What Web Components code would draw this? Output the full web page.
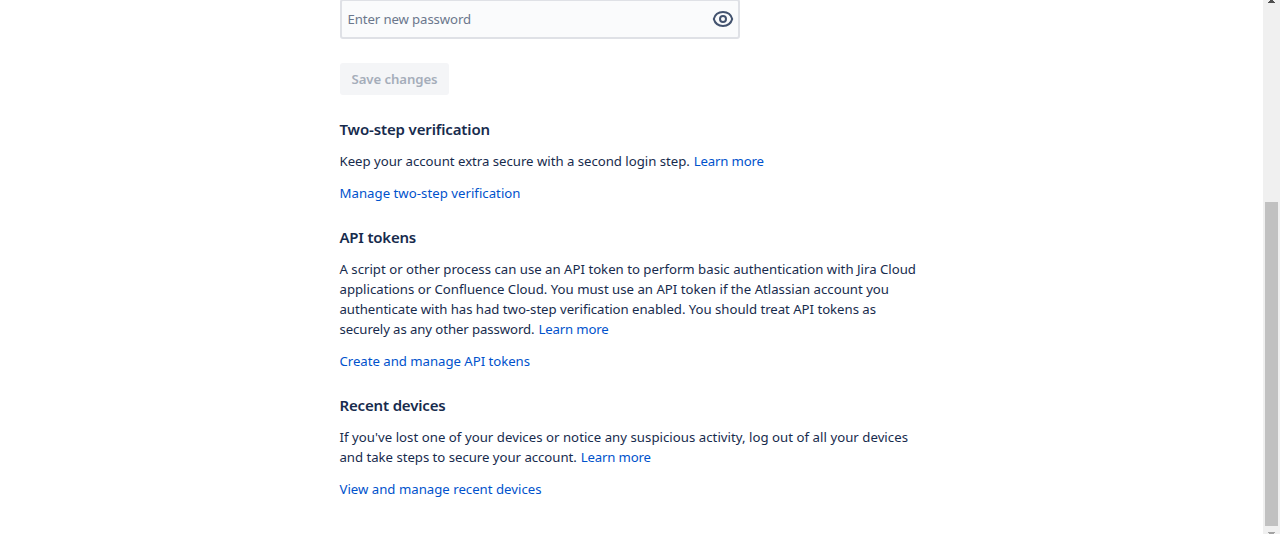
<!DOCTYPE html>
<html lang="en">
<head>
<meta charset="utf-8">
<title>Security</title>
<style>
html,body{margin:0;height:534px;overflow:hidden;background:#fff}
body{font:13.2px/20px "Noto Sans","Open Sans",sans-serif;color:#172b4d}
</style>
</head>
<body>
<security-page>
  <password-field><text-run w="123.5">Enter new password</text-run></password-field>
  <save-button><text-run w="86">Save changes</text-run></save-button>
  <info-section>
    <text-run slot="title" w="150.5">Two-step verification</text-run>
    <text-line><text-run w="350.3">Keep your account extra secure with a second login step.</text-run><text-run link w="70">Learn more</text-run></text-line>
    <text-run slot="action" link w="181">Manage two-step verification</text-run>
  </info-section>
  <info-section>
    <text-run slot="title" w="76.5">API tokens</text-run>
    <text-line><text-run w="576.5">A script or other process can use an API token to perform basic authentication with Jira Cloud</text-run></text-line>
    <text-line><text-run w="549.5">applications or Confluence Cloud. You must use an API token if the Atlassian account you</text-run></text-line>
    <text-line><text-run w="536.5">authenticate with has had two-step verification enabled. You should treat API tokens as</text-run></text-line>
    <text-line><text-run w="195">securely as any other password.</text-run><text-run link w="70">Learn more</text-run></text-line>
    <text-run slot="action" link w="190.5">Create and manage API tokens</text-run>
  </info-section>
  <info-section>
    <text-run slot="title" w="106">Recent devices</text-run>
    <text-line><text-run w="568.5">If you've lost one of your devices or notice any suspicious activity, log out of all your devices</text-run></text-line>
    <text-line><text-run w="237.3">and take steps to secure your account.</text-run><text-run link w="70">Learn more</text-run></text-line>
    <text-run slot="action" link w="202">View and manage recent devices</text-run>
  </info-section>
</security-page>
<script>
function define(name, html, connected) {
  customElements.define(name, class extends HTMLElement {
    constructor() {
      super();
      this.attachShadow({mode: 'open'}).innerHTML = html;
    }
    connectedCallback() { if (connected) connected(this); }
  });
}
define('scroll-bar', `<style>
:host{display:flex;flex-direction:column;justify-content:space-between;width:17px;height:534px;background:#f0f0f0;flex:none}
.thumb{width:13px;height:324px;margin-left:2px;background:#c1c1c1}
svg{display:block}
.up{margin-bottom:199px}.down{margin-top:5px}
</style>
<svg class="up" width="17" height="3" shape-rendering="crispEdges"><path d="M7 0h3v1H7zM6 1h5v1H6zM5 2h7v1H5z" fill="#505050"/></svg>
<div class="thumb"></div>
<svg class="down" width="17" height="3" shape-rendering="crispEdges"><path d="M5 1h7v1H5zM6 2h5v1H6z" fill="#a3a3a3"/></svg>`);
define('security-page', `<style>
:host{display:flex;justify-content:space-between;height:534px;overflow:hidden}
main{box-sizing:border-box;width:940px;padding-left:340px}
</style><main><slot></slot></main><scroll-bar></scroll-bar>`);
define('password-field', `<style>
:host{display:flex;box-sizing:border-box;width:400px;height:40px;margin-top:-1px;border:2px solid #dfe1e6;border-radius:3px;background:#fafbfc;color:#6b778c;align-items:center;justify-content:space-between;padding:0 4px 0 5.5px}
svg{display:block}
</style><slot></slot>
<svg width="22" height="18" viewBox="0 0 22 18" fill="none" stroke="#42526e" stroke-width="2"><path d="M11 2.1C6.3 2.1 2.9 5 1.8 9c1.1 4 4.5 6.9 9.2 6.9S19.1 13 20.2 9C19.1 5 15.7 2.1 11 2.1z"/><circle cx="11" cy="9" r="3"/></svg>`);
define('save-button', `<style>
:host{display:flex;width:109px;height:32px;margin-top:24px;align-items:center;justify-content:center;background:#f4f5f7;border-radius:3px;color:#a5adba;font-weight:600}
</style><slot></slot>`);
define('info-section', `<style>
:host{display:block;margin:24px 0 0 -0.5px}
:host(:first-of-type){margin-top:24px}
h3{margin:0 0 12px;font-size:15px;font-weight:600;line-height:20px}
.action{margin-top:12px;height:20px}
</style><h3><slot name="title"></slot></h3><slot></slot><div class="action"><slot name="action"></slot></div>`);
define('text-line', `<style>:host{display:flex;gap:4px;height:20px}</style><slot></slot>`);
// Tracks a run of text so that it fills the measure given in "w".
define('text-run', `<style>
:host{display:block;width:max-content;white-space:nowrap;font-kerning:normal}
:host([link]){color:#0052cc;cursor:pointer}
</style><slot></slot>`, el => {
  const natural = el.getBoundingClientRect().width;
  el.style.letterSpacing = (el.getAttribute('w') - natural) / el.textContent.length + 'px';
});
</script>
</body>
</html>
